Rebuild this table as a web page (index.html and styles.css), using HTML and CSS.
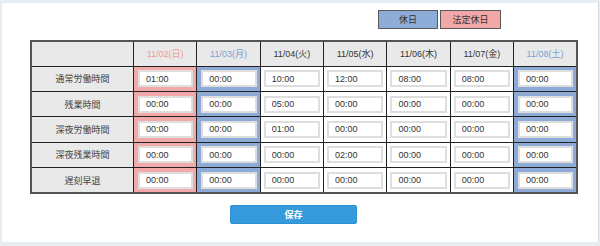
FILE: index.html
```html
<!DOCTYPE html>
<html lang="ja">
<head>
<meta charset="utf-8">
<link rel="stylesheet" href="styles.css">
</head>
<body>
<div class="panel">
  <div class="legend">
    <div class="legend-item holiday">休日</div>
    <div class="legend-item legal">法定休日</div>
  </div>
  <table class="grid">
    <thead>
      <tr>
        <th class="corner"></th>
        <th class="date-legal">11/02(日)</th>
        <th class="date-holiday">11/03(月)</th>
        <th>11/04(火)</th>
        <th>11/05(水)</th>
        <th>11/06(木)</th>
        <th>11/07(金)</th>
        <th class="date-holiday">11/08(土)</th>
      </tr>
    </thead>
    <tbody>
      <tr>
        <th class="label">通常労働時間</th>
        <td class="legal"><input class="time" value="01:00"></td>
        <td class="holiday"><input class="time" value="00:00"></td>
        <td><input class="time" value="10:00"></td>
        <td><input class="time" value="12:00"></td>
        <td><input class="time" value="08:00"></td>
        <td><input class="time" value="08:00"></td>
        <td class="holiday"><input class="time" value="00:00"></td>
      </tr>
      <tr>
        <th class="label">残業時間</th>
        <td class="legal"><input class="time" value="00:00"></td>
        <td class="holiday"><input class="time" value="00:00"></td>
        <td><input class="time" value="05:00"></td>
        <td><input class="time" value="00:00"></td>
        <td><input class="time" value="00:00"></td>
        <td><input class="time" value="00:00"></td>
        <td class="holiday"><input class="time" value="00:00"></td>
      </tr>
      <tr>
        <th class="label">深夜労働時間</th>
        <td class="legal"><input class="time" value="00:00"></td>
        <td class="holiday"><input class="time" value="00:00"></td>
        <td><input class="time" value="01:00"></td>
        <td><input class="time" value="00:00"></td>
        <td><input class="time" value="00:00"></td>
        <td><input class="time" value="00:00"></td>
        <td class="holiday"><input class="time" value="00:00"></td>
      </tr>
      <tr>
        <th class="label">深夜残業時間</th>
        <td class="legal"><input class="time" value="00:00"></td>
        <td class="holiday"><input class="time" value="00:00"></td>
        <td><input class="time" value="00:00"></td>
        <td><input class="time" value="02:00"></td>
        <td><input class="time" value="00:00"></td>
        <td><input class="time" value="00:00"></td>
        <td class="holiday"><input class="time" value="00:00"></td>
      </tr>
      <tr>
        <th class="label">遅刻早退</th>
        <td class="legal"><input class="time" value="00:00"></td>
        <td class="holiday"><input class="time" value="00:00"></td>
        <td><input class="time" value="00:00"></td>
        <td><input class="time" value="00:00"></td>
        <td><input class="time" value="00:00"></td>
        <td><input class="time" value="00:00"></td>
        <td class="holiday"><input class="time" value="00:00"></td>
      </tr>
    </tbody>
  </table>
  <button class="save">保存</button>
</div>
</body>
</html>
```

FILE: styles.css
```css
html, body {
  margin: 0;
  padding: 0;
}
body {
  background: #e8edf2;
  font-family: "Liberation Sans", "Noto Sans CJK JP", sans-serif;
  font-size: 9px;
  color: #333;
  padding: 3px 2px 4px 2px;
}
.panel {
  background: #fff;
  height: 239px;
  width: 596px;
  box-sizing: border-box;
  box-shadow: 1px 0 0 #d8d8d8;
  display: flex;
  flex-direction: column;
}
.legend {
  display: flex;
  justify-content: flex-end;
  gap: 2px;
  padding: 7px 97px 0 0;
}
.legend-item {
  height: 19px;
  box-sizing: border-box;
  border: 1px solid #5a5a5a;
  display: flex;
  align-items: center;
  justify-content: center;
  color: #333;
}
.legend-item.holiday {
  width: 60px;
  background: #8eacd8;
}
.legend-item.legal {
  width: 61px;
  background: #f2a8a8;
}
.grid {
  margin: 11px 0 0 28px;
  width: 548px;
  border-collapse: collapse;
  table-layout: fixed;
  border: 2px solid #555;
}
.grid th,
.grid td {
  border: 1px solid #222;
  padding: 0;
}
.grid thead th {
  height: 23.5px;
  background: #e9e9e9;
  font-weight: normal;
  color: #333;
  text-align: center;
}
.grid th.corner {
  width: 101px;
}
.grid th.date-legal {
  color: #ef9a9a;
}
.grid th.date-holiday {
  color: #7f9fd1;
}
.grid th.label {
  background: #e9e9e9;
  font-weight: normal;
  color: #444;
  text-align: center;
  height: 24.4px;
}
.grid td {
  padding: 0 3px 0 3px;
  vertical-align: middle;
}
.grid td.legal {
  background: #f2a9a9;
  padding-left: 4px;
}
.grid td.holiday {
  background: #8eabd7;
  padding-left: 4px;
}
.time {
  display: block;
  width: 100%;
  height: 17px;
  box-sizing: border-box;
  border: 2px solid #dedede;
  background: #fff;
  font-family: "Liberation Sans", sans-serif;
  font-size: 9px;
  color: #333;
  padding: 0 0 0 6px;
  margin: 0;
  outline: none;
}
.save {
  margin: 11px 0 0 228px;
  width: 127px;
  height: 19px;
  border: 1px solid #2f8fd0;
  border-radius: 2px;
  background: #359bdc;
  color: #fff;
  font-family: "Liberation Sans", "Noto Sans CJK JP", sans-serif;
  font-size: 9px;
  font-weight: bold;
  padding: 0;
}
```
